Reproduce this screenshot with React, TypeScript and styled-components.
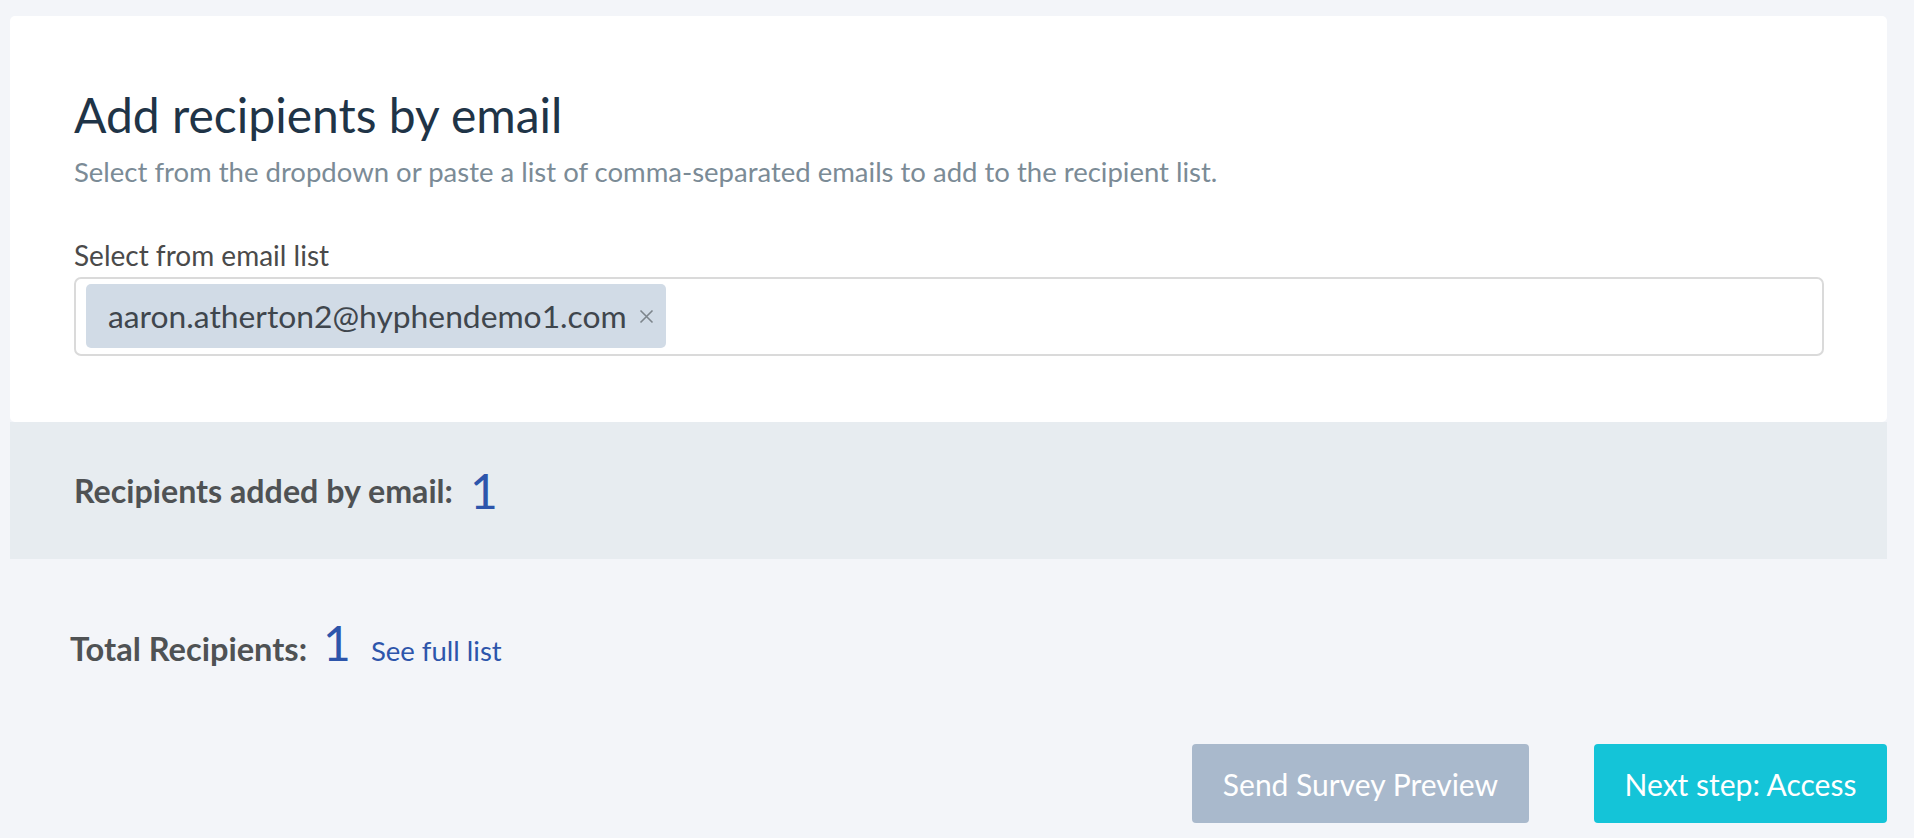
import React from "react";
import styled, { createGlobalStyle } from "styled-components";

const GlobalStyle = createGlobalStyle`
  body {
    margin: 0;
    background: #f3f5f9;
    font-family: Lato, "Open Sans", sans-serif;
  }
`;

const Page = styled.div`
  padding: 16px 27px 0 10px;
  min-height: 100vh;
  box-sizing: border-box;
`;

const Card = styled.section`
  background: #ffffff;
  border-radius: 5px;
  padding: 71px 63px 66px 64px;
`;

const Title = styled.h1`
  margin: 0;
  font-size: 48px;
  line-height: 56px;
  font-weight: 400;
  color: #1f3447;
`;

const Subtitle = styled.p`
  margin: 13px 0 0;
  font-size: 27.5px;
  line-height: 32px;
  color: #7b8b96;
`;

const Label = styled.label`
  display: block;
  margin-top: 51px;
  font-size: 28px;
  line-height: 32px;
  color: #4a4a4a;
`;

const EmailInput = styled.div`
  margin-top: 6px;
  height: 79px;
  box-sizing: border-box;
  border: 2px solid #dadada;
  border-radius: 7px;
  padding: 5px 10px;
  display: flex;
  align-items: flex-start;
`;

const Chip = styled.span`
  display: inline-flex;
  align-items: center;
  gap: 12px;
  height: 64px;
  padding: 0 12px 0 22px;
  border-radius: 5px;
  background: #d1dbe6;
  color: #3f464d;
  font-size: 31.8px;
`;

const Band = styled.div`
  background: #e7ecf0;
  padding: 44px 64px 43px;
`;

const CountRow = styled.div<{ $align: string }>`
  display: flex;
  align-items: ${(p) => p.$align};
  line-height: 50px;
`;

const CountLabel = styled.span<{ $size: number }>`
  font-size: ${(p) => p.$size}px;
  font-weight: 700;
  color: #4f5254;
`;

const Count = styled.span<{ $gap: number }>`
  margin-left: ${(p) => p.$gap}px;
  font-size: 48px;
  color: #2d55ab;
`;

const Totals = styled(CountRow)`
  margin: 60px 0 0 60px;
  line-height: 1;
`;

const FullListLink = styled.a`
  margin-left: 20px;
  font-size: 27.5px;
  color: #2d55ab;
  text-decoration: none;
  cursor: pointer;
`;

const Actions = styled.div`
  display: flex;
  justify-content: flex-end;
  gap: 65px;
  margin-top: 77px;
`;

const Button = styled.button<{ $variant: "muted" | "primary"; $width: number }>`
  width: ${(p) => p.$width}px;
  height: 79px;
  border: none;
  border-radius: 4px;
  background: ${(p) => (p.$variant === "primary" ? "#14c4d8" : "#a9b9cc")};
  color: #ffffff;
  font-family: Lato, "Open Sans", sans-serif;
  font-size: 30px;
  cursor: pointer;
`;

const CloseIcon = () => (
  <svg width="15" height="15" viewBox="0 0 15 15" fill="none" stroke="#7d858c" strokeWidth="1.6">
    <path d="M1.5 1.5 L13.5 13.5 M13.5 1.5 L1.5 13.5" />
  </svg>
);

const App = () => {
  return (
    <>
      <GlobalStyle />
      <Page>
        <Card>
          <Title>Add recipients by email</Title>
          <Subtitle>
            Select from the dropdown or paste a list of comma-separated emails to add to the recipient list.
          </Subtitle>
          <Label>Select from email list</Label>
          <EmailInput>
            <Chip>
              aaron.atherton2@hyphendemo1.com
              <CloseIcon />
            </Chip>
          </EmailInput>
        </Card>
        <Band>
          <CountRow $align="center">
            <CountLabel $size={32.2}>Recipients added by email:</CountLabel>
            <Count $gap={17}>1</Count>
          </CountRow>
        </Band>
        <Totals $align="baseline">
          <CountLabel $size={32.6}>Total Recipients:</CountLabel>
          <Count $gap={16}>1</Count>
          <FullListLink>See full list</FullListLink>
        </Totals>
        <Actions>
          <Button $variant="muted" $width={337}>Send Survey Preview</Button>
          <Button $variant="primary" $width={293}>Next step: Access</Button>
        </Actions>
      </Page>
    </>
  );
};

export default App;
